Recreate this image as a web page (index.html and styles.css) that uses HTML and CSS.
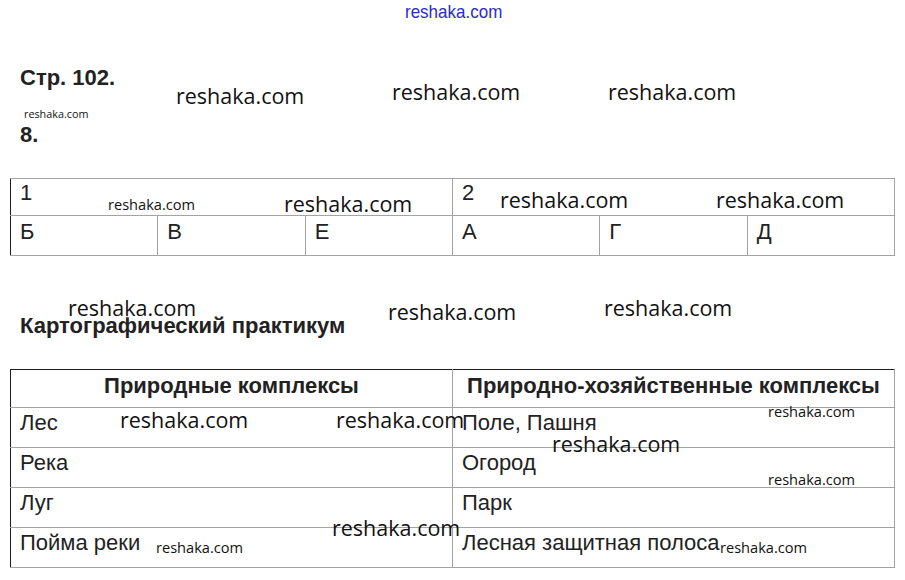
FILE: index.html
```html
<!DOCTYPE html>
<html lang="ru">
<head>
<meta charset="utf-8">
<title>Стр. 102</title>
<link rel="stylesheet" href="styles.css">
</head>
<body>
<div class="page">
  <h1 class="title">Стр. 102.</h1>
  <h2 class="num">8.</h2>

  <table class="t1">
    <tr class="r-head">
      <td colspan="3">1</td>
      <td colspan="3">2</td>
    </tr>
    <tr class="r-body">
      <td>Б</td><td>В</td><td>Е</td><td>А</td><td>Г</td><td>Д</td>
    </tr>
  </table>

  <h2 class="section">Картографический практикум</h2>

  <table class="t2">
    <tr class="r-head">
      <th>Природные комплексы</th>
      <th>Природно-хозяйственные комплексы</th>
    </tr>
    <tr><td>Лес</td><td>Поле, Пашня</td></tr>
    <tr><td>Река</td><td>Огород</td></tr>
    <tr><td>Луг</td><td>Парк</td></tr>
    <tr class="r-dark"><td>Пойма реки</td><td>Лесная защитная полоса</td></tr>
  </table>

  <div class="wm wm-top">reshaka.com</div>
  <div class="wm wm-s" style="left:24px;top:109px">reshaka.com</div>
  <div class="wm wm-l" style="left:176px;top:85px">reshaka.com</div>
  <div class="wm wm-l" style="left:392px;top:81px">reshaka.com</div>
  <div class="wm wm-l" style="left:608px;top:81px">reshaka.com</div>
  <div class="wm wm-m" style="left:108px;top:197px">reshaka.com</div>
  <div class="wm wm-l" style="left:284px;top:193px">reshaka.com</div>
  <div class="wm wm-l" style="left:500px;top:189px">reshaka.com</div>
  <div class="wm wm-l" style="left:716px;top:189px">reshaka.com</div>
  <div class="wm wm-l" style="left:68px;top:297px">reshaka.com</div>
  <div class="wm wm-l" style="left:388px;top:301px">reshaka.com</div>
  <div class="wm wm-l" style="left:604px;top:297px">reshaka.com</div>
  <div class="wm wm-l" style="left:120px;top:409px">reshaka.com</div>
  <div class="wm wm-l" style="left:336px;top:409px">reshaka.com</div>
  <div class="wm wm-m" style="left:768px;top:404px">reshaka.com</div>
  <div class="wm wm-l" style="left:552px;top:433px">reshaka.com</div>
  <div class="wm wm-m" style="left:768px;top:472px">reshaka.com</div>
  <div class="wm wm-l" style="left:332px;top:517px">reshaka.com</div>
  <div class="wm wm-m" style="left:156px;top:540px">reshaka.com</div>
  <div class="wm wm-m" style="left:720px;top:540px">reshaka.com</div>
</div>
</body>
</html>
```
FILE: styles.css
```css
html, body {
  margin: 0;
  padding: 0;
  background: #ffffff;
}

.page {
  position: relative;
  width: 905px;
  height: 580px;
  overflow: hidden;
  font-family: "Liberation Sans", Arial, sans-serif;
  color: #1a1a1a;
  padding-top: 67px;
  box-sizing: border-box;
}

.title,
.num,
.section {
  margin: 0 0 0 20px;
  font-size: 22px;
  line-height: 1;
  font-weight: bold;
  color: #222;
}

.title {
  height: 21px;
}

.num {
  margin-top: 36px;
  height: 21px;
}

.section {
  margin-top: 59px;
  height: 21px;
}

table {
  border-collapse: collapse;
  table-layout: fixed;
  margin-left: 10px;
  width: 885px;
}

.t1 {
  margin-top: 33px;
}

.t2 {
  margin-top: 33px;
}

td, th {
  border: 1px solid #a3a3a3;
  padding: 4px 9px 0;
  vertical-align: top;
  text-align: left;
  font-size: 22px;
  line-height: 1;
  font-weight: normal;
  color: #222;
}

tr > :first-child {
  border-left-color: #1c1c1c;
}

.t1 .r-head td {
  height: 33px;
  padding-top: 3px;
}

.t1 .r-body td {
  height: 34px;
  padding-top: 5px;
}

.t2 .r-head th {
  border-top-color: #1c1c1c;
  text-align: center;
  font-weight: bold;
  height: 32px;
  padding-top: 5px;
  padding-left: 0;
  padding-right: 0;
}

.t2 td {
  height: 35px;
  padding-top: 4px;
}

.t2 .r-dark td {
  border-top-color: #1c1c1c;
}

.wm {
  position: absolute;
  white-space: nowrap;
  line-height: 1;
  font-family: "Open Sans", "DejaVu Sans", sans-serif;
  color: #111;
}

.wm-l {
  font-size: 21.5px;
}

.wm-m {
  font-size: 14.6px;
}

.wm-s {
  font-size: 10.8px;
}

.wm-top {
  left: 405px;
  top: 2px;
  font-family: "Liberation Sans", Arial, sans-serif;
  font-size: 17px;
  color: #2b2bd6;
  transform: scaleY(1.12);
  transform-origin: left top;
}
```
